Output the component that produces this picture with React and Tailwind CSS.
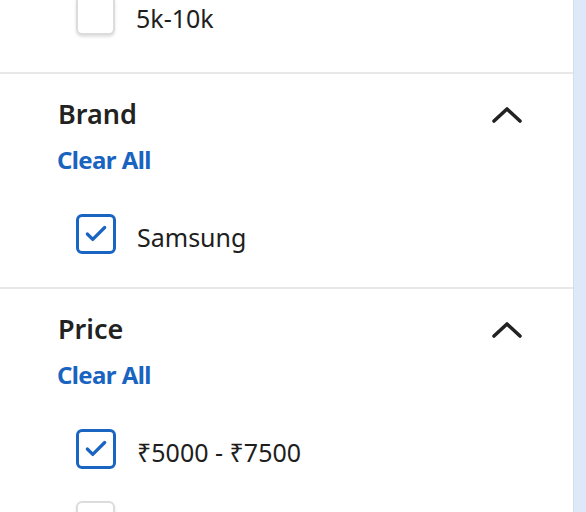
import { Check } from 'lucide-react';

const font = { fontFamily: '"Noto Sans", "Open Sans", sans-serif' };

export default function App() {
  return (
    <div className="flex w-[586px] h-[512px] overflow-hidden bg-white" style={font}>
      <div className="w-[573px] flex flex-col">
        {/* tail of previous filter */}
        <div className="-mt-[5px] mb-[37px]">
          <Item label="5k-10k" />
        </div>
        <Divider />
        <Section title="Brand" items={[{ label: 'Samsung', checked: true }]} />
        <Divider />
        <Section title="Price" items={[{ label: '₹5000 - ₹7500', checked: true }, { label: '' }]} />
      </div>
      <div className="flex-1 bg-[#dde8f8] border-l border-[#d3ddec]" />
    </div>
  );
}

function Divider() {
  return <div className="h-[2px] bg-[#e8e8e8] shrink-0" />;
}

function Section({ title, items }) {
  return (
    <div className="pt-[23px] pb-[33px] flex flex-col">
      <div className="flex items-center justify-between pl-[58px] pr-[50px] h-[32px]">
        <span className="text-[27px] font-semibold text-[#222] leading-none">{title}</span>
        <svg width="32" height="20" viewBox="0 0 32 20" fill="none" className="mt-[1px]">
          <path d="M3 17 L16 5 L29 17" stroke="#222" strokeWidth="3.6" strokeLinecap="round" strokeLinejoin="round" />
        </svg>
      </div>
      <div className="pl-[57px] mt-[17px] text-[24px] font-bold tracking-[-0.6px] text-[#1864c0] leading-[28px]">Clear All</div>
      <div className="mt-[40px] flex flex-col gap-[32px]">
        {items.map((it, i) => (
          <Item key={i} label={it.label} checked={it.checked} />
        ))}
      </div>
    </div>
  );
}

function Item({ label, checked }) {
  return (
    <div className="flex items-center h-[40px] pl-[76px] gap-[21px]">
      {checked ? (
        <div className="w-[40px] h-[40px] rounded-[6px] border-[3.5px] border-[#1a65c2] bg-white flex items-center justify-center shrink-0">
          <Check size={26} strokeWidth={3} className="text-[#1a65c2]" />
        </div>
      ) : (
        <div className="w-[39px] h-[40px] rounded-[6px] border-2 border-[#dcdcdc] bg-white shadow-[0_2px_3px_rgba(0,0,0,0.12)] shrink-0" />
      )}
      {label && <span className="mt-[6px] text-[25px] leading-[34px] text-[#1e1e1e]">{label}</span>}
    </div>
  );
}
